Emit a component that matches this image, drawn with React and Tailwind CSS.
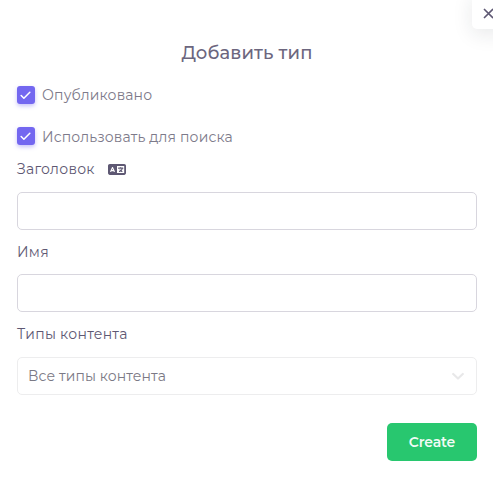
import { FaLanguage } from 'react-icons/fa6';

function CheckRow({ label, className = '', textClass = '' }) {
  return (
    <label className={`flex h-[18px] items-center ${className}`}>
      <span className="flex size-[18px] shrink-0 items-center justify-center rounded-[3px] bg-[#7367f0] shadow-[0_2px_4px_rgba(115,103,240,0.4)]">
        <svg className="mr-[2px] size-[13px]" viewBox="0 0 24 24" fill="none" stroke="white" strokeWidth="2.8" strokeLinecap="round" strokeLinejoin="round">
          <path d="M20 6 9 17l-5-5" />
        </svg>
      </span>
      <span className={`ml-[7px] whitespace-nowrap text-[14px] font-normal tracking-[0.14px] text-[#7d7a8a] ${textClass}`}>{label}</span>
    </label>
  );
}

export default function App() {
  return (
    <div className="relative h-[479px] w-[493px] overflow-hidden bg-white px-4 font-['Montserrat','Inter',sans-serif] text-[#5e5873]">
      <button aria-label="Close" className="absolute top-[-8px] left-[472px] flex h-[37px] w-[38px] rounded-[5px] bg-white pt-[16px] pl-[11px] shadow-[0_5px_20px_rgba(34,41,47,0.1)]">
        <svg className="size-[11px]" viewBox="0 0 11 11" fill="none" stroke="#5e5873" strokeWidth="1.7" strokeLinecap="round">
          <path d="m1.5 1.5 8 8M9.5 1.5l-8 8" />
        </svg>
      </button>
      <form className="ml-px flex w-[460px] flex-col">
        <h1 className="mt-[40px] h-[26px] text-center text-[18px] leading-[26px] font-medium tracking-[0.14px] text-[#6c667e]">Добавить тип</h1>
        <CheckRow label="Опубликовано" className="mt-[20px]" />
        <CheckRow label="Использовать для поиска" className="mt-[23px]" textClass="pt-[2px]" />
        <label className="mt-[14px] flex h-[20px] items-center text-[14px] leading-[20px] tracking-[0.27px]">
          <span className="w-[91px]">Заголовок</span>
          <FaLanguage className="h-[15px] w-[18px]" />
        </label>
        <input className="mt-[13px] h-[38px] rounded-[5px] border border-[#d8d6de] px-3 outline-none" />
        <label className="mt-[12px] h-[20px] text-[14px] leading-[20px] tracking-[0.27px]">Имя</label>
        <input className="mt-[12px] h-[38px] rounded-[5px] border border-[#d8d6de] px-3 outline-none" />
        <label className="mt-[12px] h-[20px] text-[14px] leading-[20px] tracking-[0.27px]">Типы контента</label>
        <div className="mt-[13px] flex h-[38px] items-center justify-between rounded-[5px] border border-[#ededee] pr-[12px] pl-[10px]">
          <span className="text-[14px] tracking-[0.1px] text-[#7b7985]">Все типы контента</span>
          <svg className="h-[8px] w-[12px]" viewBox="0 0 12 8" fill="none" stroke="#e8e8e9" strokeWidth="2.2" strokeLinecap="round" strokeLinejoin="round">
            <path d="m1.2 2 4.8 4.5L10.8 2" />
          </svg>
        </div>
        <button type="button" className="mt-[28px] h-[38px] w-[90px] self-end rounded-[5px] bg-[#28c76f] text-[14px] font-semibold tracking-[-0.15px] text-white/95">Create</button>
      </form>
    </div>
  );
}
